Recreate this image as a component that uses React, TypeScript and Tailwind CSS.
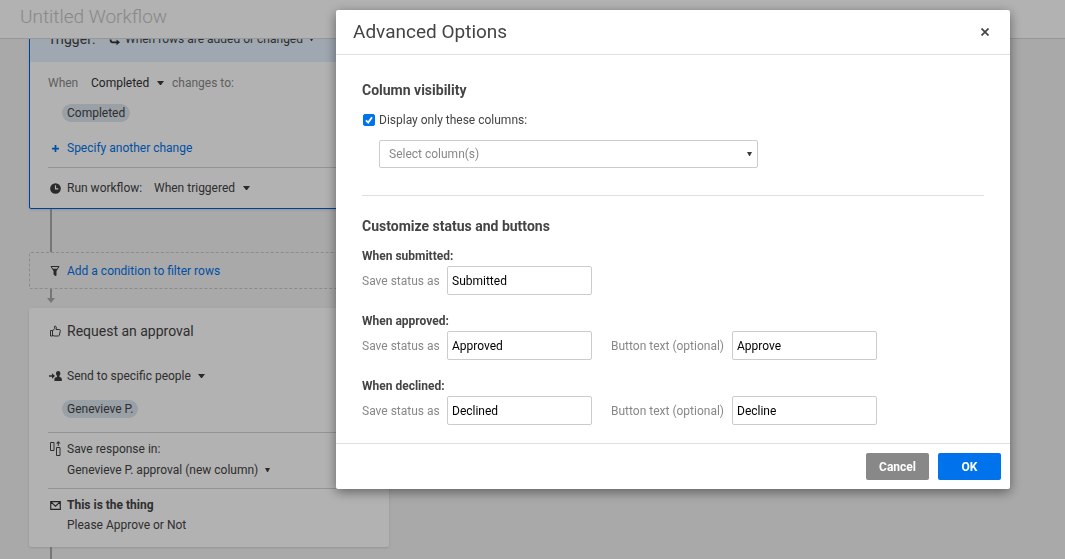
import type { ReactNode } from 'react'

function Caret({ small = false }: { small?: boolean }) {
  return (
    <svg viewBox="0 0 8 5" className={small ? 'h-[4px] w-[5px]' : 'h-[4px] w-[7px]'} preserveAspectRatio="none" fill="#3d3d3d" aria-hidden="true">
      <path d="M0 0h8L4.6 5H3.4z" />
    </svg>
  )
}

function Picker({ label, value, small }: { label: string; value: string; small?: boolean }) {
  return (
    <span className="grid w-fit items-center">
      <select
        aria-label={label}
        defaultValue={value}
        className={`col-start-1 row-start-1 appearance-none bg-transparent outline-none ${small ? 'pr-[11px]' : 'pr-[14px]'}`}
      >
        <option>{value}</option>
      </select>
      <span className="pointer-events-none col-start-1 row-start-1 justify-self-end">
        <Caret small={small} />
      </span>
    </span>
  )
}

function IconRow({ icon, className, children }: { icon?: ReactNode; className: string; children: ReactNode }) {
  return (
    <div className={`grid grid-cols-[14px_1fr] items-center gap-[5px] ${className}`}>
      <span className="flex justify-center">{icon}</span>
      <div className="flex items-center">{children}</div>
    </div>
  )
}

function Chip({ children }: { children: ReactNode }) {
  return <span className="ml-[14px] flex h-[18px] w-fit items-center rounded-full bg-[#dce5ee] px-[5px]">{children}</span>
}

function SwapIcon() {
  return (
    <svg viewBox="0 0 12 14" className="h-[14px] w-3" fill="none" stroke="#333" strokeWidth="1.800" aria-hidden="true">
      <path d="M10.500 6V3.500H4M1.500 7.500c0 1.800.6 2.800 2.200 2.800H8" />
      <path d="M4.500.600v5.800L1 3.500zM7.500 7.400v5.800l3.500-2.900z" fill="#333" stroke="none" />
    </svg>
  )
}

function PlusIcon() {
  return (
    <svg viewBox="0 0 8 8" className="size-[7px]" stroke="#0073ec" strokeWidth="2" aria-hidden="true">
      <path d="M4 0v8M0 4h8" />
    </svg>
  )
}

function ClockIcon() {
  return (
    <svg viewBox="0 0 12 12" className="size-[11px]" aria-hidden="true">
      <circle cx="6" cy="6" r="5.800" fill="#3d3d3d" />
      <path d="M6 2.500V6.500h3" fill="none" stroke="#fff" strokeWidth="1.300" />
    </svg>
  )
}

function FilterIcon() {
  return (
    <svg viewBox="0 0 10 12" className="h-3 w-[10px]" aria-hidden="true">
      <path d="M1 1.500h8L6 6v4.600L4 9.600V6z" fill="none" stroke="#3d3d3d" strokeWidth="1" />
      <path d="M2.500 3.800h5L6 6v4.800L4 9.600V6z" fill="#3d3d3d" />
    </svg>
  )
}

function ThumbIcon() {
  return (
    <svg viewBox="0 0 12 12" className="size-3" fill="none" stroke="#444" strokeWidth="1" strokeLinejoin="round" aria-hidden="true">
      <path d="M1.500 5.500h2v5.500h-2zM3.500 6 5.600 3.600V1.200c1.300-.3 1.900.6 1.700 1.800L7 4.500h3.300c.8 0 1.100.6 1 1.200l-.9 4.300c-.1.600-.5 1-1.100 1H5L3.500 10.200" />
    </svg>
  )
}

function SendIcon() {
  return (
    <svg viewBox="0 0 13 10" className="h-[10px] w-[13px]" fill="#3d3d3d" aria-hidden="true">
      <path d="M0 4.200h3V2.300L6 5 3 7.700V5.800H0z" />
      <path d="M9.200 0c1.500 0 2.200 1 2.200 2.300 0 1.200-.5 2-1 2.500v1.200c1.600.4 2.400 1 2.400 2V10H5.400V8c0-1 .9-1.600 2.600-2V4.800c-.6-.5-1-1.300-1-2.500C7 1 7.700 0 9.200 0z" />
    </svg>
  )
}

function ColumnIcon() {
  return (
    <svg viewBox="0 0 11 15" className="h-[15px] w-[11px]" fill="none" stroke="#444" strokeWidth="1" aria-hidden="true">
      <path d="M.5 1.500h3.500v8H.5zM6.500 6.500H10v8H6.500zM8.250 5V1.500" />
      <path d="M8.250 0l2.250 2.500H6z" fill="#444" stroke="none" />
    </svg>
  )
}

function MailIcon() {
  return (
    <svg viewBox="0 0 12 10" className="h-[9px] w-[11px]" fill="none" stroke="#333" strokeWidth="1.300" aria-hidden="true">
      <path d="M.7.700h10.600v8.600H.7zM.9 1l5.100 4.700L11.100 1" />
    </svg>
  )
}

function Workflow() {
  return (
    <div className="flex h-screen flex-col overflow-hidden bg-[#f2f2f2]">
      <header className="z-10 flex h-[39px] shrink-0 items-center border-b border-[#d8d8d8] bg-white px-5 pb-1">
        <h1 className="text-[19px] font-light text-[#c4c4c4]">Untitled Workflow</h1>
      </header>
      <main className="min-h-0 flex-1 overflow-hidden px-[29px]">
        <div className="-mt-6 w-[360px] max-w-full">
          <section className="overflow-hidden rounded-[2px] border border-[#005ee0] bg-white shadow">
            <div className="flex h-[46px] items-center bg-[#e4effc] px-[18px]">
              <h2 className="w-[61px] text-[14px]">Trigger:</h2>
              <SwapIcon />
              <span className="w-1" />
              <Picker label="Trigger" value="When rows are added or changed" small />
            </div>
            <div className="px-[18px] pt-[5px]">
              <div className="flex h-8 items-center text-[#888]">
                <span className="w-[43px]">When</span>
                <span className="text-[#333]">
                  <Picker label="Column" value="Completed" />
                </span>
                <span className="ml-2">changes to:</span>
              </div>
              <div className="mt-[5px]">
                <Chip>Completed</Chip>
              </div>
              <IconRow className="mt-[10px] h-8" icon={<PlusIcon />}>
                <button type="button" className="text-[#0073ec]">Specify another change</button>
              </IconRow>
              <IconRow className="mt-[3px] h-[41px] border-t border-[#d4d4d4]" icon={<ClockIcon />}>
                <span className="w-[87px]">Run workflow:</span>
                <Picker label="Run workflow" value="When triggered" />
              </IconRow>
            </div>
          </section>

          <div className="ml-[21px] h-[43px] w-[2px] bg-[#aaa]" />
          <div className="rounded-[2px] border border-dashed border-[#c8c8c8] px-[18px]">
            <IconRow className="h-[35px]" icon={<FilterIcon />}>
              <button type="button" className="text-[#0073ec]">Add a condition to filter rows</button>
            </IconRow>
          </div>
          <svg viewBox="0 0 8 14" className="ml-[18px] h-[14px] w-2" fill="#aaa" aria-hidden="true">
            <path d="M3 0h2v9h3l-4 5-4-5h3z" />
          </svg>

          <section className="mt-[5px] rounded-[2px] bg-white px-[19px] pt-[7px] pb-3 shadow">
            <IconRow className="h-8" icon={<ThumbIcon />}>
              <h2 className="text-[14px]">Request an approval</h2>
            </IconRow>
            <IconRow className="mt-[13px] h-8" icon={<SendIcon />}>
              <Picker label="Recipients" value="Send to specific people" />
            </IconRow>
            <div className="mt-2">
              <Chip>Genevieve P.</Chip>
            </div>
            <div className="mt-[14px] border-t border-[#d4d4d4] pt-[5px] pb-2">
              <IconRow className="h-[21px]" icon={<ColumnIcon />}>Save response in:</IconRow>
              <IconRow className="h-[21px]">
                <Picker label="Response column" value="Genevieve P. approval (new column)" small />
              </IconRow>
            </div>
            <div className="border-t border-[#d4d4d4] pt-[6px]">
              <IconRow className="h-5" icon={<MailIcon />}>
                <strong className="font-bold">This is the thing</strong>
              </IconRow>
              <IconRow className="h-5">Please Approve or Not</IconRow>
            </div>
          </section>
          <div className="ml-[21px] h-10 w-[2px] bg-[#aaa]" />
        </div>
      </main>
    </div>
  )
}

const inputClass = 'h-[29px] w-full rounded-[2px] border border-[#ccc] bg-white px-1 text-black outline-none'

function StatusGroup({ title, status, button }: { title: string; status: string; button?: string }) {
  const id = status.toLowerCase()
  return (
    <section>
      <h4 className="h-5 leading-5 font-bold">{title}</h4>
      <div className="grid grid-cols-[85px_145px_140px_145px] items-center text-[#888]">
        <label htmlFor={`${id}-status`}>Save status as</label>
        <input id={`${id}-status`} className={inputClass} defaultValue={status} />
        {button && (
          <>
            <label htmlFor={`${id}-button`} className="pl-[19px] whitespace-nowrap">Button text (optional)</label>
            <input id={`${id}-button`} className={inputClass} defaultValue={button} />
          </>
        )}
      </div>
    </section>
  )
}

function AdvancedOptions() {
  return (
    <div role="dialog" aria-labelledby="dialog-title" className="w-[674px] max-w-full rounded-[2px] bg-white text-[#444] shadow-[0_3px_12px_rgba(0,0,0,0.45)]">
      <div className="flex h-[45px] items-center justify-between border-b border-[#e0e0e0] pr-[21px] pl-[17px]">
        <h2 id="dialog-title" className="text-[19px]">Advanced Options</h2>
        <button type="button" aria-label="Close">
          <svg viewBox="0 0 8 8" className="size-2" stroke="#444" strokeWidth="1.700" aria-hidden="true">
            <path d="M.5.500l7 7M7.500.500l-7 7" />
          </svg>
        </button>
      </div>
      <div className="px-[26px] pt-[25px] pb-[18px]">
        <h3 className="h-5 text-[14px] leading-5 font-bold">Column visibility</h3>
        <label className="mt-[10px] flex h-5 w-fit items-center gap-1">
          <span className="ml-px grid size-3 place-items-center">
            <input type="checkbox" defaultChecked className="peer col-start-1 row-start-1 size-3 appearance-none rounded-[2px] border border-[#0073ec] bg-white checked:bg-[#0073ec]" />
            <svg viewBox="0 0 12 12" className="pointer-events-none col-start-1 row-start-1 size-3" fill="none" stroke="#fff" strokeWidth="1.800" aria-hidden="true">
              <path d="M3 6.300l2.200 2.300L9 3.200" />
            </svg>
          </span>
          Display only these columns:
        </label>
        <div className="mt-[10px] ml-[17px] grid w-[379px] max-w-full items-center">
          <select aria-label="Columns to display" className="col-start-1 row-start-1 h-7 w-full appearance-none rounded-[2px] border border-[#ccc] bg-white px-[9px] text-[#888] outline-none">
            <option>Select column(s)</option>
          </select>
          <span className="pointer-events-none col-start-1 row-start-1 mr-[6px] justify-self-end">
            <Caret small />
          </span>
        </div>
        <hr className="mt-[27px] border-[#e0e0e0]" />
        <h3 className="mt-5 mb-[10px] h-5 text-[14px] leading-5 font-bold">Customize status and buttons</h3>
        <div className="flex flex-col gap-4">
          <StatusGroup title="When submitted:" status="Submitted" />
          <StatusGroup title="When approved:" status="Approved" button="Approve" />
          <StatusGroup title="When declined:" status="Declined" button="Decline" />
        </div>
      </div>
      <div className="flex justify-end gap-[9px] border-t border-[#e0e0e0] p-[9px] font-bold text-white">
        <button type="button" className="h-[27px] w-[63px] rounded-[2px] bg-[#888]">Cancel</button>
        <button type="button" className="h-[27px] w-[63px] rounded-[2px] bg-[#0073ec]">OK</button>
      </div>
    </div>
  )
}

export default function App() {
  return (
    <div className="font-[Roboto,sans-serif] text-[12px] leading-4 text-[#444]">
      <Workflow />
      <div className="fixed inset-0 z-20 flex items-start justify-end overflow-auto bg-black/30 pt-[10px] pr-[55px]">
        <AdvancedOptions />
      </div>
    </div>
  )
}
